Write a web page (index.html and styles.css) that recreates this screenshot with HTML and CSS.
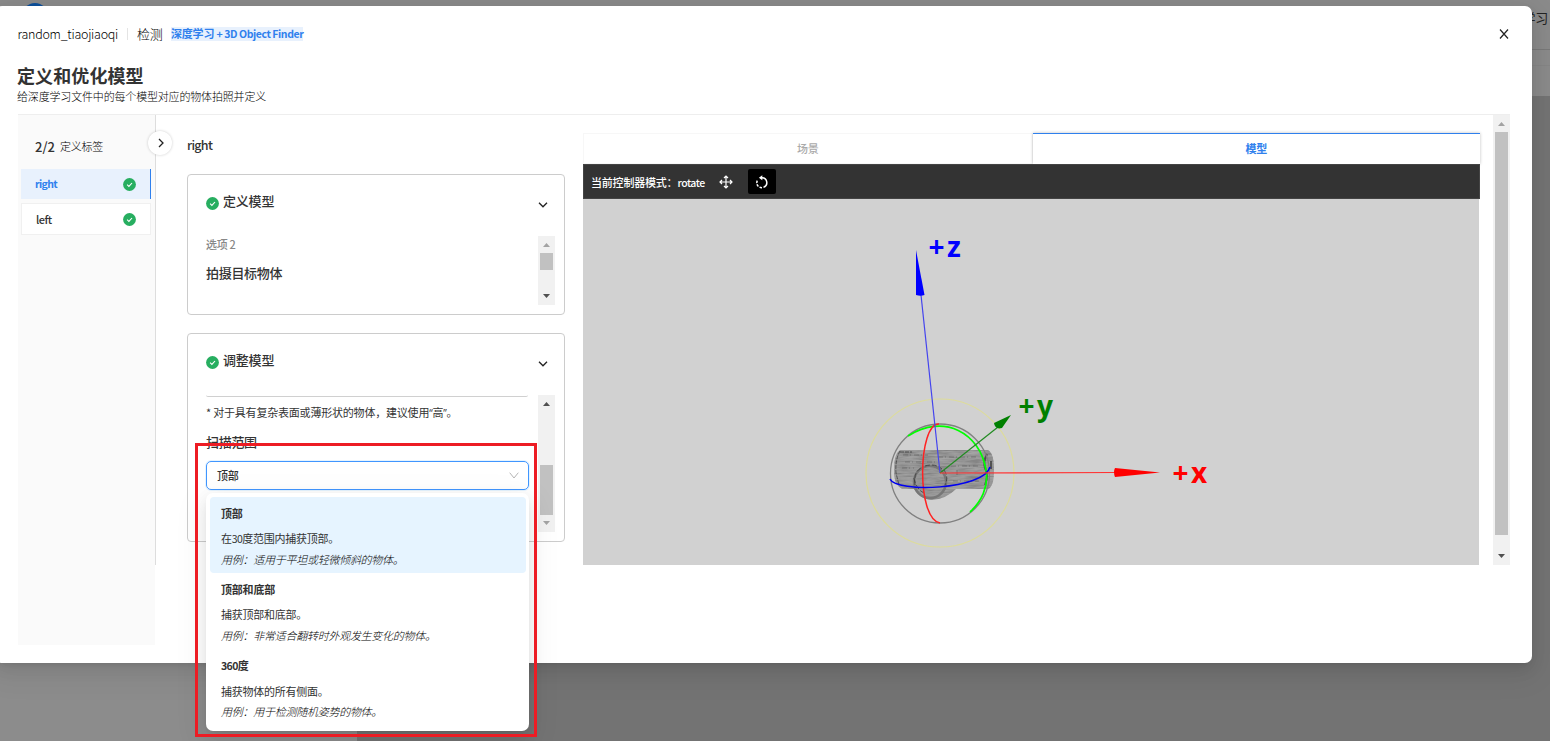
FILE: index.html
```
<!DOCTYPE html>
<html lang="zh-CN">
<head>
<meta charset="utf-8">
<title>定义和优化模型</title>
<link rel="stylesheet" href="styles.css">
</head>
<body>
<svg class="defs" width="0" height="0">
  <symbol id="check" viewBox="0 0 13 13"><circle cx="6.5" cy="6.5" r="6.4" fill="#27ae60"/><path d="M4.1 6.7l1.8 1.7 3.1-3.4" fill="none" stroke="#fff" stroke-width="1.1"/></symbol>
  <symbol id="down" viewBox="0 0 10 6"><path d="M1 .8l4 4 4-4" fill="none" stroke="#222" stroke-width="1.3"/></symbol>
</svg>
<div class="page">
  <div class="page-bottom"></div>
  <div class="page-top"><span class="page-logo"></span><span class="page-text">学习</span></div>

  <main class="modal">
    <header class="crumbs">
      <span class="crumb-name">random_tiaojiaoqi</span>
      <span class="crumb-sep"></span>
      <span class="crumb-kind">检测</span>
      <span class="crumb-tag">深度学习 <span class="latin">+ 3D Object Finder</span></span>
      <svg class="close" viewBox="0 0 10 10"><path d="M1 .5l8 9M9 .5l-8 9" stroke="#222" stroke-width="1.2"/></svg>
    </header>
    <h1 class="title">定义和优化模型</h1>
    <p class="subtitle">给深度学习文件中的每个模型对应的物体拍照并定义</p>

    <div class="body">
      <aside class="side">
        <div class="side-head"><b>2/2</b><span>定义标签</span></div>
        <div class="label active"><span>right</span><svg class="ok"><use href="#check"/></svg></div>
        <div class="label"><span>left</span><svg class="ok"><use href="#check"/></svg></div>
      </aside>
      <section class="content">
        <span class="toggle"><svg viewBox="0 0 6 10"><path d="M1 1l4 4-4 4" fill="none" stroke="#222" stroke-width="1.3"/></svg></span>
        <div class="steps">
          <h2 class="label-name">right</h2>
          <article class="card card-define">
            <div class="card-head"><svg class="ok"><use href="#check"/></svg><h3>定义模型</h3><svg class="chev"><use href="#down"/></svg></div>
            <div class="card-scroll">
              <div class="card-text"><p class="option">选项 2</p><p class="strong">拍摄目标物体</p></div>
              <div class="bar"><i class="up off"></i><i class="thumb thumb-define"></i><i class="dn"></i></div>
            </div>
          </article>
          <article class="card card-adjust">
            <div class="card-head"><svg class="ok"><use href="#check"/></svg><h3>调整模型</h3><svg class="chev"><use href="#down"/></svg></div>
            <div class="card-scroll">
              <div class="card-text">
                <div class="cut-field"></div>
                <p class="hint">* 对于具有复杂表面或薄形状的物体，建议使用<span class="quote">“</span>高<span class="quote">”</span>。</p>
                <p class="strong range">扫描范围</p>
                <div class="select"><span>顶部</span><svg viewBox="0 0 10 7"><path d="M.7 .7L5 6l4.300-5.300" fill="none" stroke="#b5b5b5"/></svg></div>
              </div>
              <div class="bar"><i class="up"></i><i class="thumb thumb-adjust"></i><i class="dn off"></i></div>
            </div>
          </article>
        </div>
        <div class="viewer">
          <nav class="tabs"><span class="tab">场景</span><span class="tab on">模型</span></nav>
          <div class="tools">
            <span class="mode">当前控制器模式：<em>rotate</em></span>
            <span class="tool"><svg viewBox="0 0 14 14" fill="none" stroke="#fff" stroke-width="1.2"><path d="M7 1v12M1 7h12M5 3l2-2 2 2M5 11l2 2 2-2M3 5L1 7l2 2M11 5l2 2-2 2"/></svg></span>
            <span class="tool on"><svg viewBox="0 0 14 14" fill="none" stroke="#fff" stroke-width="1.5"><path d="M5.500 2.700h1.500a5 5 0 0 1 1.500 9.700"/><path d="M7 12.700a5 5 0 0 1-4.200-8" stroke-dasharray="2.500 1.300"/><path d="M7.300.2v5L3.900 2.700z" fill="#fff" stroke="none"/></svg></span>
          </div>
          <svg class="scene" viewBox="583 199 896 366">
            <defs>
              <filter id="grain" x="0" y="0" width="1" height="1"><feTurbulence type="fractalNoise" baseFrequency=".06 .6" numOctaves="3" seed="4"/><feColorMatrix values=".8 0 0 0 .1  .8 0 0 0 .1  .8 0 0 0 .1  0 0 0 0 1"/><feComposite in2="SourceGraphic" operator="in"/></filter>
            </defs>
            <g filter="url(#grain)"><path d="M900 450h88q6 3 6 20t-6 19h-32q-10 10-24 11-12-1-18-11h-12q-9-5-8-20 0-15 6-19z"/></g>
            <path d="M900 450h88q6 3 6 20t-6 19h-32q-10 10-24 11-12-1-18-11h-12q-9-5-8-20 0-15 6-19z" fill="#7c7c7c" opacity=".6"/>
            <g fill="none" stroke="#333">
              <path d="M900 451q-5 9-4 22l3 12M900 452h12" stroke-dasharray="4 1" opacity=".7"/>
              <ellipse cx="930" cy="482" rx="16" ry="16" stroke="#777" stroke-width="2.500"/>
              <path d="M915 485q-2-14 8-18M914 478q2 11 10 15M944 470q5 7 1 15M925 466q10-3 17 3" stroke-dasharray="5 2" opacity=".7"/>
              <path d="M987 454q-4 8-2 14 4 7 0 17M991 461v8" stroke-width="2" opacity=".7"/>
              <path d="M903 455h25M938 457h40M905 462h33M902 468h12M951 466h28M957 470v7M953 481h26" stroke-dasharray="5 2 1 3" stroke-width=".7" opacity=".5"/>
            </g>
            <g fill="none">
              <circle cx="940" cy="473" r="74" stroke="#dddc9b" stroke-width="1.200"/>
              <circle cx="940" cy="473.500" r="49.500" stroke="#808080" stroke-width="1.300"/>
              <path d="M908 436C944 413 980 433 986 470c3 17-5 32-16 42" stroke="#0f0" stroke-width="1.700"/>
              <path d="M939 424C918 423 916 519 940 523" stroke="#f22" stroke-width="1.500"/>
              <path d="M890 479C896 493 984 490 990 467" stroke="#0000f0" stroke-width="1.500"/>
              <path d="M940 473L921 295" stroke="#44e" stroke-width="1.200"/>
              <path d="M940 473l58-46" stroke="#228b22" stroke-width="1.200"/>
              <path d="M940 473l175-.5" stroke="#f33" stroke-width="1.200"/>
            </g>
            <path d="M916 250l8.500 45q-4 1.500-8.500 0z" fill="#00f"/>
            <path d="M1011 415l-9 13q-7 2-8-5z" fill="green"/>
            <path d="M1160 472.500l-45-4.500q-2 4 0 9z" fill="red"/>
            <g class="axis"><text x="928.500" y="257" fill="#00f">+z</text><text x="1018.500" y="416" fill="green">+y</text><text x="1172.500" y="483" fill="red">+x</text></g>
          </svg>
        </div>
      </section>
      <div class="bar bar-main"><i class="up off"></i><i class="thumb thumb-main"></i><i class="dn"></i></div>
    </div>
  </main>

  <div class="dropdown">
    <div class="opt picked"><b>顶部</b><p>在<span class="num">30</span>度范围内捕获顶部。</p><p class="case">用例：适用于平坦或轻微倾斜的物体。</p></div>
    <div class="opt"><b>顶部和底部</b><p>捕获顶部和底部。</p><p class="case">用例：非常适合翻转时外观发生变化的物体。</p></div>
    <div class="opt"><b><span class="num">360</span>度</b><p>捕获物体的所有侧面。</p><p class="case">用例：用于检测随机姿势的物体。</p></div>
  </div>
  <div class="marker"></div>
</div>
</body>
</html>
```
FILE: styles.css
```
* { box-sizing: border-box; }
body { margin: 0; font-family: "Noto Sans CJK SC", sans-serif; font-size: 11px; letter-spacing: -0.2px; color: #333; }
h1, h2, h3, p { margin: 0; font-weight: 400; }
i, em { font-style: normal; }
.defs { position: absolute; }
.page { position: relative; width: 1550px; height: 741px; overflow: hidden; background: #737373; padding-top: 6px; }
.page-top { position: absolute; left: 0; top: 0; width: 1550px; height: 96px; background: linear-gradient(#787878, #787878) 0 49px / 100% 1px no-repeat, linear-gradient(#858585, #858585) 0 65px / 100% 1px no-repeat, #8a8a8a; }
.page-bottom { position: absolute; left: 0; top: 96px; width: 357px; height: 645px; background: #8c8c8c; }
.page-logo { position: absolute; left: 22px; top: 3px; width: 26px; height: 26px; border-radius: 50%; background: #0d4f9a; }
.page-text { position: absolute; right: 2px; top: 8px; font-size: 13px; line-height: 20px; color: #222; }

.modal { position: relative; width: 1537px; height: 657px; margin-left: -5px; padding: 0 22px 0 23px; background: #fff; border-radius: 7px; box-shadow: 0 6px 16px rgba(0,0,0,.08), 0 3px 6px -4px rgba(0,0,0,.12), 0 9px 28px 8px rgba(0,0,0,.05); }
.crumbs { display: flex; align-items: center; height: 56px; font-size: 13px; letter-spacing: -.3px; }
.crumb-name { width: 101px; flex: none; white-space: nowrap; font-size: 12.5px; font-weight: 300; color: #000; letter-spacing: -.26px; margin: -2px 0 0 -.5px; }
.crumb-sep { width: 1px; flex: none; height: 12px; margin: 0 9px 0 8.500px; background: #e4e4e4; }
.crumb-kind { width: 34px; flex: none; font-weight: 300; color: #000; margin-top: -2px; }
.crumb-tag { height: 14px; line-height: 13px; background: #e8f1fd; color: #2f80ed; font-size: 11px; font-weight: 700; letter-spacing: -.2px; white-space: nowrap; }
.latin { font-size: 10.5px; letter-spacing: -.43px; }
.close { width: 10px; height: 10px; margin-left: auto; margin-right: 1px; }
.title { height: 27px; line-height: 26px; margin-left: -1px; font-size: 18px; letter-spacing: .1px; font-weight: 700; }
.subtitle { height: 25px; line-height: 15px; margin-left: -1px; font-weight: 300; color: #000; letter-spacing: -.17px; }
.body { display: flex; align-items: flex-start; width: 1492px; border-top: 1px solid #eee; }
.side { width: 137px; height: 530px; padding: 20px 4px 0 3px; background: #fafafa; }
.side-head { display: flex; align-items: center; gap: 5px; height: 22px; margin: 0 0 12px 14px; }
.side-head b { font-size: 13px; font-weight: 500; letter-spacing: 0; }
.side-head span { font-weight: 300; color: #000; }
.label { display: flex; align-items: center; justify-content: space-between; height: 32px; padding: 0 14px; margin-bottom: 4px; background: #fff; border: 1px solid #f0f0f0; font-weight: 500; letter-spacing: -.5px; }
.label.active { height: 30px; background: #e8f1fd; border-width: 0 1px 0 0; border-color: #2f80ed; color: #2f80ed; font-weight: 700; font-size: 10.5px; letter-spacing: -.6px; }
.active span { margin-top: -2px; }
.ok { width: 13px; height: 13px; flex: none; }
.content { position: relative; display: flex; gap: 18px; width: 1338px; height: 450px; padding: 18px 13px 0 31px; border-left: 1px solid #ddd; }
.toggle { position: absolute; left: -8px; top: 16px; width: 24px; height: 24px; border-radius: 50%; background: #fff; box-shadow: 0 0 3px rgba(0,0,0,.2); display: grid; place-items: center; }
.toggle svg { width: 6px; height: 10px; margin-left: 2px; }
.steps { width: 378px; flex: none; }
.label-name { height: 41px; line-height: 24px; font-size: 12.5px; font-weight: 500; letter-spacing: -.7px; }
.card { border: 1px solid #ccc; border-radius: 4px; padding: 16px 9px 0 18px; }
.card-define { height: 141px; margin-bottom: 18px; }
.card-adjust { height: 209px; }
.card-head { display: flex; align-items: center; height: 22px; padding-right: 7px; }
.card-head .ok { margin: 3px 4px 0 0; }
.card-head h3 { font-size: 13px; line-height: 20px; font-weight: 500; letter-spacing: -.2px; margin-top: -3px; }
.chev { width: 10px; height: 6px; margin: 6px 0 0 auto; }
.card-scroll { display: flex; justify-content: space-between; margin-top: 23px; }
.card-define .card-scroll { height: 69px; }
.card-adjust .card-scroll { height: 137px; }
.card-text { width: 323px; }
.option { line-height: 16px; color: #888; font-weight: 500; letter-spacing: -.35px; }
.strong { font-size: 13px; font-weight: 500; line-height: 20px; letter-spacing: -.3px; margin-top: 11px; }
.cut-field { height: 2px; margin-right: 1px; border-bottom: 1px solid #d0d0d0; border-radius: 0 0 4px 4px; }
.hint { margin-top: 6px; line-height: 18px; white-space: nowrap; letter-spacing: -.2px; }
.quote { font-family: "Open Sans", sans-serif; font-size: 10px; }
.range { margin: 10px 0 9px; }
.select { height: 29px; border: 1px solid #4096ff; border-radius: 5px; box-shadow: 0 0 0 1px #e6f4ff; padding: 0 9px 0 10px; display: flex; align-items: center; justify-content: space-between; font-weight: 500; }
.select span { margin-top: -2px; }
.select svg { width: 10px; height: 7px; }
.bar { display: flex; flex-direction: column; align-items: center; width: 17px; background: #f1f1f1; }
.up, .dn { width: 7px; height: 4px; flex: none; background: #505050; }
.up { margin-top: 7px; clip-path: polygon(50% 0, 100% 100%, 0 100%); }
.dn { margin: auto 0 7px; clip-path: polygon(0 0, 100% 0, 50% 100%); }
.off { background: #a3a3a3; }
.thumb { width: 13px; background: #c1c1c1; }
.thumb-define { height: 17px; margin-top: 6px; }
.thumb-adjust { height: 50px; margin-top: 59px; }
.bar-main { height: 450px; }
.thumb-main { height: 403px; margin-top: 6px; }
.viewer { width: 897px; flex: none; }
.tabs { display: flex; height: 31px; }
.tab { flex: 1; border: 1px solid #f7f7f7; text-align: center; line-height: 28px; color: #aaa; font-weight: 500; }
.tab.on { border: 0; border-top: 1px solid #2f80ed; color: #2f80ed; font-weight: 700; box-shadow: 0 0 3px rgba(0,0,0,.25); }
.tools { position: relative; display: flex; align-items: center; height: 35px; padding-left: 7px; background: #333; border: 1px solid #444; color: #fff; }
.mode { width: 121px; flex: none; white-space: nowrap; font-weight: 500; letter-spacing: -.2px; }
.mode em { font-size: 10.5px; letter-spacing: -.45px; }
.tool { display: grid; place-items: center; width: 28px; height: 25px; margin-right: 7.500px; border-radius: 2px; }
.tool.on { background: #000; }
.tool svg { width: 14px; height: 14px; }
.scene { display: block; width: 896px; height: 366px; background: #d1d1d1; }
.axis { font: bold 28px "Noto Sans", sans-serif; letter-spacing: 2.5px; }

.dropdown { position: absolute; left: 206px; top: 493px; width: 323px; height: 238px; padding: 4px 3px 4px 4px; background: #fff; border-radius: 7px; box-shadow: 0 6px 16px rgba(0,0,0,.08), 0 3px 6px -4px rgba(0,0,0,.12), 0 9px 28px 8px rgba(0,0,0,.05); }
.opt { height: 75.500px; padding: 7px 11px 0; line-height: 18px; border-radius: 4px; letter-spacing: -.26px; }
.opt b { display: block; font-weight: 700; margin-bottom: 7px; letter-spacing: -.2px; }
.opt p { height: 20.500px; }
.num { font-size: 10.5px; letter-spacing: -.6px; }
.picked { background: #e6f4ff; height: 76px; }
.opt .case { font-style: italic; font-weight: 300; color: #000; }
.marker { position: absolute; left: 195px; top: 443px; width: 342px; height: 294px; border: 3px solid #ed1c24; }
```
